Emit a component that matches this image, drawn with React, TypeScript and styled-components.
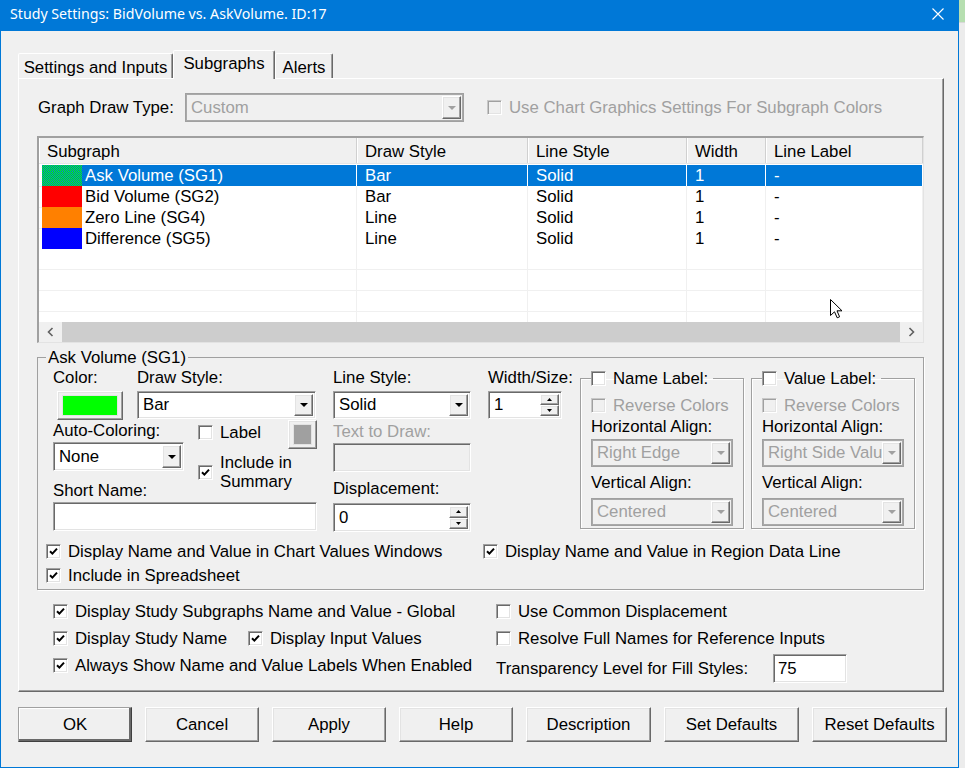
import React from 'react'
import styled, { createGlobalStyle, css } from 'styled-components'

const GlobalStyle = createGlobalStyle`
  * { box-sizing: border-box; }
  html, body { margin: 0; padding: 0; }
  body {
    background: #e8e8e8;
    font-family: "Liberation Sans", Arial, sans-serif;
    font-size: 16.8px;
    color: #000;
  }
`

const raised = css`
  border: 1px solid;
  border-color: #ffffff #696969 #696969 #ffffff;
  box-shadow: inset -1px -1px 0 #a0a0a0, inset 1px 1px 0 #e3e3e3;
`

const sunken = css`
  border: 1px solid;
  border-color: #a0a0a0 #ffffff #ffffff #a0a0a0;
  box-shadow: inset 1px 1px 0 #696969, inset -1px -1px 0 #e3e3e3;
`

const subgraphs = [
  { id: 1, name: 'Ask Volume (SG1)', color: '#00ff00', style: 'Bar', line: 'Solid', width: '1', label: '-' },
  { id: 2, name: 'Bid Volume (SG2)', color: '#ff0000', style: 'Bar', line: 'Solid', width: '1', label: '-' },
  { id: 3, name: 'Zero Line (SG4)', color: '#ff8000', style: 'Line', line: 'Solid', width: '1', label: '-' },
  { id: 4, name: 'Difference (SG5)', color: '#0000ff', style: 'Line', line: 'Solid', width: '1', label: '-' },
]

const columns = ['Subgraph', 'Draw Style', 'Line Style', 'Width', 'Line Label']
const buttons = [
  { text: 'OK', w: 114, main: true },
  { text: 'Cancel', w: 114 },
  { text: 'Apply', w: 114 },
  { text: 'Help', w: 114 },
  { text: 'Description', w: 125 },
  { text: 'Set Defaults', w: 135 },
  { text: 'Reset Defaults', w: 135 },
]

const DownTri = ({ disabled }: { disabled?: boolean }) => (
  <svg width="8" height="4" viewBox="0 0 8 4">
    <polygon points="0,0 8,0 4,4" fill={disabled ? '#a0a0a0' : '#000'} />
  </svg>
)

const SmallTri = ({ up }: { up?: boolean }) => (
  <svg width="5" height="3" viewBox="0 0 5 3">
    <polygon points={up ? '0,3 5,3 2.5,0' : '0,0 5,0 2.5,3'} fill="#000" />
  </svg>
)

const Tick = () => (
  <svg width="9" height="9" viewBox="0 0 9 9">
    <path d="M1 4.2 L3.4 6.6 L8 1.6" stroke="#000" strokeWidth="2" fill="none" />
  </svg>
)

const Check = ({ checked, disabled }: { checked?: boolean; disabled?: boolean }) => (
  <CheckBox $disabled={disabled}>{checked && <Tick />}</CheckBox>
)

const Combo = ({ value, w, h, disabled, mt }: { value: string; w: number; h?: number; disabled?: boolean; mt?: number }) => (
  <FieldShell $w={w} $h={h} $disabled={disabled} $mt={mt}>
    <FieldValue>{value}</FieldValue>
    <DropButton>
      <DownTri disabled={disabled} />
    </DropButton>
  </FieldShell>
)

const Spin = ({ value, w, h, mt }: { value: string; w: number; h?: number; mt?: number }) => (
  <FieldShell $w={w} $h={h} $mt={mt}>
    <FieldValue>{value}</FieldValue>
    <SpinButtons>
      <SpinButton><SmallTri up /></SpinButton>
      <SpinButton><SmallTri /></SpinButton>
    </SpinButtons>
  </FieldShell>
)

const LabelGroup = ({ title, h, v }: { title: string; h: string; v: string }) => (
  <SubGroup>
    <SubLegend>
      <Check />
      {title}
    </SubLegend>
    <CheckRow $disabled $mt={8}>
      <Check disabled />
      Reverse Colors
    </CheckRow>
    <FieldLabel $mt={3}>Horizontal Align:</FieldLabel>
    <Combo value={h} w={142} disabled mt={3} />
    <FieldLabel $mt={7}>Vertical Align:</FieldLabel>
    <Combo value={v} w={142} disabled mt={6} />
  </SubGroup>
)

export default function App() {
  return (
    <Page>
      <GlobalStyle />
      <Window>
        <TitleBar>
          <span>Study Settings: BidVolume vs. AskVolume. ID:17</span>
          <svg width="12" height="12" viewBox="0 0 12 12">
            <path d="M0.5 0.5 L11.5 11.5 M11.5 0.5 L0.5 11.5" stroke="#fff" strokeWidth="1.1" />
          </svg>
        </TitleBar>
        <Body>
          <TabStrip>
            <Tab $w={155}>Settings and Inputs</Tab>
            <Tab $w={102} $active>Subgraphs</Tab>
            <Tab $w={58}>Alerts</Tab>
          </TabStrip>
          <TabPanel>
            <DrawTypeRow>
              <FieldLabel $w={147}>Graph Draw Type:</FieldLabel>
              <Combo value="Custom" w={279} h={29} disabled />
              <CheckRow $disabled $ml={23}>
                <Check disabled />
                Use Chart Graphics Settings For Subgraph Colors
              </CheckRow>
            </DrawTypeRow>

            <ListFrame>
              <ListHeader>
                {columns.map((c) => (
                  <HeaderCell key={c}>{c}</HeaderCell>
                ))}
              </ListHeader>
              <ListBody>
                {subgraphs.map((s, i) => (
                  <ListRow key={s.id} $selected={i === 0}>
                    <NameCell $selected={i === 0}>
                      <Swatch $color={s.color} $selected={i === 0} />
                      <NameText $selected={i === 0}>{s.name}</NameText>
                    </NameCell>
                    <Cell $selected={i === 0}>{s.style}</Cell>
                    <Cell $selected={i === 0}>{s.line}</Cell>
                    <Cell $selected={i === 0}>{s.width}</Cell>
                    <Cell $selected={i === 0}>{s.label}</Cell>
                  </ListRow>
                ))}
                {[0, 1, 2, 3].map((n) => (
                  <ListRow key={`empty-${n}`}>
                    <Cell />
                    <Cell />
                    <Cell />
                    <Cell />
                    <Cell />
                  </ListRow>
                ))}
              </ListBody>
              <ScrollBar>
                <ScrollArrow>
                  <svg width="7" height="10" viewBox="0 0 7 10">
                    <path d="M5.5 1 L1.5 5 L5.5 9" stroke="#606060" strokeWidth="1.6" fill="none" />
                  </svg>
                </ScrollArrow>
                <ScrollThumb />
                <ScrollArrow>
                  <svg width="7" height="10" viewBox="0 0 7 10">
                    <path d="M1.5 1 L5.5 5 L1.5 9" stroke="#606060" strokeWidth="1.6" fill="none" />
                  </svg>
                </ScrollArrow>
              </ScrollBar>
              <Cursor width="13" height="20" viewBox="0 0 13 20">
                <path d="M0.5 0.5 L0.5 16.5 L4.5 12.8 L7.2 18.8 L9.6 17.8 L7 11.8 L12 11.8 Z" fill="#fff" stroke="#000" strokeWidth="1" />
              </Cursor>
            </ListFrame>

            <GroupBox>
              <GroupTitle>Ask Volume (SG1)</GroupTitle>
              <TopRow>
                <MainGrid>
                  <WideRow>
                    <Stack $w={84}>
                      <FieldLabel>Color:</FieldLabel>
                      <SwatchButton $w={66} $h={29} $mt={4} $ml={4}>
                        <SwatchFill $color="#00ff00" />
                      </SwatchButton>
                    </Stack>
                    <Stack>
                      <FieldLabel>Draw Style:</FieldLabel>
                      <Combo value="Bar" w={179} mt={4} />
                    </Stack>
                  </WideRow>
                  <Stack $mt={2}>
                    <FieldLabel>Auto-Coloring:</FieldLabel>
                    <Combo value="None" w={131} h={29} mt={2} />
                    <FieldLabel $mt={11}>Short Name:</FieldLabel>
                  </Stack>
                  <CheckColumn>
                    <CheckLine>
                      <CheckRow $mt={3}>
                        <Check />
                        Label
                      </CheckRow>
                      <SwatchButton $w={29} $h={29}>
                        <SwatchFill $color="#a0a0a0" />
                      </SwatchButton>
                    </CheckLine>
                    <TwoLineCheck>
                      <Check checked />
                      <span>
                        Include in
                        <br />
                        Summary
                      </span>
                    </TwoLineCheck>
                  </CheckColumn>
                  <WideRow>
                    <TextBox $w={264} $h={29} $mt={2} />
                  </WideRow>
                </MainGrid>

                <Stack $w={138} $ml={16}>
                  <FieldLabel>Line Style:</FieldLabel>
                  <Combo value="Solid" w={138} mt={4} />
                  <FieldLabel $mt={4} $disabled>Text to Draw:</FieldLabel>
                  <TextBox $w={138} $h={29} $mt={2} $disabled />
                  <FieldLabel $mt={8}>Displacement:</FieldLabel>
                  <Spin value="0" w={138} h={29} mt={5} />
                </Stack>

                <Stack $w={74} $ml={17}>
                  <FieldLabel>Width/Size:</FieldLabel>
                  <Spin value="1" w={74} mt={4} />
                </Stack>

                <Stack $ml={18}>
                  <LabelGroup title="Name Label:" h="Right Edge" v="Centered" />
                </Stack>
                <Stack $ml={7}>
                  <LabelGroup title="Value Label:" h="Right Side Valu" v="Centered" />
                </Stack>
              </TopRow>

              <CheckRow $mt={10}>
                <CheckPair $w={430}>
                  <Check checked />
                  Display Name and Value in Chart Values Windows
                </CheckPair>
                <CheckPair>
                  <Check checked />
                  Display Name and Value in Region Data Line
                </CheckPair>
              </CheckRow>
              <CheckRow $mt={5}>
                <Check checked />
                Include in Spreadsheet
              </CheckRow>
            </GroupBox>

            <Options>
              <Stack>
                <OptionRow>
                  <Check checked />
                  Display Study Subgraphs Name and Value - Global
                </OptionRow>
                <OptionRow>
                  <CheckPair $w={188}>
                    <Check checked />
                    Display Study Name
                  </CheckPair>
                  <CheckPair>
                    <Check checked />
                    Display Input Values
                  </CheckPair>
                </OptionRow>
                <OptionRow>
                  <Check checked />
                  Always Show Name and Value Labels When Enabled
                </OptionRow>
              </Stack>
              <Stack>
                <OptionRow>
                  <Check />
                  Use Common Displacement
                </OptionRow>
                <OptionRow>
                  <Check />
                  Resolve Full Names for Reference Inputs
                </OptionRow>
                <OptionRow $h={33}>
                  <FieldLabel $w={270}>Transparency Level for Fill Styles:</FieldLabel>
                  <TextBox $w={74} $h={29}>75</TextBox>
                </OptionRow>
              </Stack>
            </Options>
          </TabPanel>

          <ButtonRow>
            {buttons.map((b) => (
              <PushButton key={b.text} $w={b.w} $main={b.main}>
                {b.text}
              </PushButton>
            ))}
          </ButtonRow>
        </Body>
      </Window>
      <OutsideStrip />
    </Page>
  )
}

const Page = styled.div`
  display: flex;
  width: 965px;
  height: 768px;
  overflow: hidden;
`

const Window = styled.div`
  width: 959px;
  height: 768px;
  flex: none;
  display: flex;
  flex-direction: column;
  background: #f0f0f0;
  border: 1px solid #0078d7;
  border-top: 0;
`

const OutsideStrip = styled.div`
  flex: 1;
  background: linear-gradient(#b6dfb0 0 22px, #d8d8d8 22px 23px, #ececec 23px);
`

const TitleBar = styled.div`
  height: 31px;
  flex: none;
  display: flex;
  align-items: center;
  justify-content: space-between;
  padding: 0 14px 4px 9px;
  background: #0078d7;
  color: #fff;
  font-family: "Noto Sans", "Liberation Sans", sans-serif;
  font-size: 14.2px;
`

const Body = styled.div`
  flex: 1;
  display: flex;
  flex-direction: column;
  padding: 19px 0 0 17px;
`

const TabStrip = styled.div`
  display: flex;
  align-items: flex-end;
  height: 28px;
`

const Tab = styled.div<{ $w: number; $active?: boolean }>`
  position: relative;
  z-index: ${(p) => (p.$active ? 2 : 1)};
  width: ${(p) => p.$w}px;
  height: ${(p) => (p.$active ? 29 : 25)}px;
  margin-bottom: ${(p) => (p.$active ? -1 : 0)}px;
  padding-top: ${(p) => (p.$active ? 3 : 4)}px;
  text-align: center;
  line-height: 19px;
  white-space: nowrap;
  background: #f0f0f0;
  border: 1px solid;
  border-bottom: 0;
  border-color: #fff #696969 transparent #fff;
  box-shadow: inset -1px 0 0 #a0a0a0;
  border-radius: 2px 2px 0 0;
`

const TabPanel = styled.div`
  width: 926px;
  height: 614px;
  display: flex;
  flex-direction: column;
  padding: 14px 0 0 19px;
  border: 1px solid;
  border-color: #fff #696969 #696969 #fff;
  box-shadow: inset -1px -1px 0 #a0a0a0;
`

const DrawTypeRow = styled.div`
  display: flex;
  align-items: center;
  height: 29px;
`

const FieldLabel = styled.span<{ $w?: number; $mt?: number; $disabled?: boolean }>`
  display: block;
  flex: none;
  width: ${(p) => (p.$w ? `${p.$w}px` : 'auto')};
  margin-top: ${(p) => p.$mt ?? 0}px;
  line-height: 18px;
  white-space: nowrap;
  color: ${(p) => (p.$disabled ? '#a0a0a0' : '#000')};
`

const FieldShell = styled.div<{ $w: number; $h?: number; $mt?: number; $disabled?: boolean }>`
  flex: none;
  width: ${(p) => p.$w}px;
  height: ${(p) => p.$h ?? 28}px;
  margin-top: ${(p) => p.$mt ?? 0}px;
  display: flex;
  padding: 2px;
  ${sunken}
  ${(p) =>
    p.$disabled &&
    css`
      border-color: #a0a0a0;
      box-shadow: inset 0 0 0 1px #a9a9a9;
    `}
  background: ${(p) => (p.$disabled ? '#f0f0f0' : '#fff')};
  color: ${(p) => (p.$disabled ? '#a0a0a0' : '#000')};
`

const FieldValue = styled.div`
  flex: 1;
  min-width: 0;
  display: flex;
  align-items: center;
  padding-left: 3px;
  white-space: nowrap;
`

const DropButton = styled.div`
  width: 19px;
  flex: none;
  display: flex;
  align-items: center;
  justify-content: center;
  background: #f0f0f0;
  ${raised}
`

const SpinButtons = styled.div`
  width: 19px;
  flex: none;
  display: flex;
  flex-direction: column;
`

const SpinButton = styled.div`
  flex: 1;
  display: flex;
  align-items: center;
  justify-content: center;
  background: #f0f0f0;
  ${raised}
`

const TextBox = styled.div<{ $w: number; $h: number; $mt?: number; $disabled?: boolean }>`
  flex: none;
  width: ${(p) => p.$w}px;
  height: ${(p) => p.$h}px;
  margin-top: ${(p) => p.$mt ?? 0}px;
  display: flex;
  align-items: center;
  padding-left: 4px;
  ${sunken}
  background: ${(p) => (p.$disabled ? '#f0f0f0' : '#fff')};
`

const CheckBox = styled.span<{ $disabled?: boolean }>`
  width: 15px;
  height: 15px;
  flex: none;
  display: flex;
  align-items: center;
  justify-content: center;
  border: 1px solid;
  border-color: ${(p) => (p.$disabled ? '#c8c8c8 #fff #fff #c8c8c8' : '#a0a0a0 #fff #fff #a0a0a0')};
  box-shadow: inset 1px 1px 0 ${(p) => (p.$disabled ? '#a0a0a0' : '#696969')}, inset -1px -1px 0 #e3e3e3;
  background: ${(p) => (p.$disabled ? '#f0f0f0' : '#fff')};
`

const CheckRow = styled.div<{ $mt?: number; $ml?: number; $disabled?: boolean }>`
  display: flex;
  align-items: center;
  gap: 7px;
  height: 19px;
  margin-top: ${(p) => p.$mt ?? 0}px;
  margin-left: ${(p) => p.$ml ?? 0}px;
  white-space: nowrap;
  color: ${(p) => (p.$disabled ? '#a0a0a0' : '#000')};
`

const CheckPair = styled.div<{ $w?: number }>`
  display: flex;
  align-items: center;
  gap: 7px;
  width: ${(p) => (p.$w ? `${p.$w}px` : 'auto')};
  flex: none;
  white-space: nowrap;
`

const ListFrame = styled.div`
  position: relative;
  width: 887px;
  height: 207px;
  margin: 14px 0 0 -1px;
  display: flex;
  flex-direction: column;
  background: #fff;
  border-style: solid;
  border-width: 2px 1px 1px 2px;
  border-color: #a0a0a0 #e3e3e3 #e3e3e3 #a0a0a0;
`

const gridCols = '318px 171px 159px 79px 1fr'

const ListHeader = styled.div`
  display: grid;
  grid-template-columns: ${gridCols};
  height: 26px;
  flex: none;
  background: #f0f0f0;
  border-bottom: 1px solid #e5e5e5;
`

const HeaderCell = styled.div`
  padding: 4px 0 0 8px;
  line-height: 20px;
  border-right: 1px solid #d0d0d0;
  box-shadow: inset 1px 0 0 #fff;
  white-space: nowrap;
`

const ListBody = styled.div`
  flex: 1;
  overflow: hidden;
  padding-top: 1px;
`

const ListRow = styled.div<{ $selected?: boolean }>`
  display: grid;
  grid-template-columns: ${gridCols};
  height: 21px;
  color: ${(p) => (p.$selected ? '#fff' : '#000')};
`

const Cell = styled.div<{ $selected?: boolean }>`
  padding-left: 8px;
  line-height: 21px;
  white-space: nowrap;
  overflow: hidden;
  background: ${(p) => (p.$selected ? '#0078d7' : '#fff')};
  border-right: 1px solid ${(p) => (p.$selected ? '#fff' : '#f0f0f0')};
  border-bottom: 1px solid #f0f0f0;
`

const NameCell = styled.div<{ $selected?: boolean }>`
  display: flex;
  padding-left: 3px;
  border-right: 1px solid ${(p) => (p.$selected ? '#fff' : '#f0f0f0')};
  border-bottom: 1px solid #f0f0f0;
`

const Swatch = styled.span<{ $color: string; $selected?: boolean }>`
  width: 40px;
  flex: none;
  background: ${(p) =>
    p.$selected ? `repeating-conic-gradient(${p.$color} 0 25%, #0078d7 0 50%) 0 0 / 2px 2px` : p.$color};
`

const NameText = styled.span<{ $selected?: boolean }>`
  flex: 1;
  padding-left: 3px;
  line-height: 21px;
  white-space: nowrap;
  background: ${(p) => (p.$selected ? '#0078d7' : '#fff')};
`

const ScrollBar = styled.div`
  height: 20px;
  flex: none;
  display: flex;
  background: #f0f0f0;
`

const ScrollArrow = styled.div`
  width: 23px;
  display: flex;
  align-items: center;
  justify-content: center;
`

const ScrollThumb = styled.div`
  flex: 1;
  background: #cdcdcd;
`

const Cursor = styled.svg`
  position: absolute;
  left: 791px;
  top: 161px;
`

const GroupBox = styled.fieldset`
  width: 887px;
  margin: 5px 0 0 -1px;
  padding: 2px 0 4px 8px;
  min-width: 0;
  border: 1px solid #a0a0a0;
  box-shadow: 1px 1px 0 #fff;
`

const GroupTitle = styled.legend`
  padding: 0 2px;
  line-height: 19px;
`

const TopRow = styled.div`
  display: flex;
  align-items: flex-start;
  padding-left: 7px;
`

const MainGrid = styled.div`
  width: 264px;
  flex: none;
  display: grid;
  grid-template-columns: 131px 14px 119px;
  align-items: start;
`

const WideRow = styled.div`
  grid-column: 1 / -1;
  display: flex;
`

const Stack = styled.div<{ $w?: number; $ml?: number; $mt?: number }>`
  display: flex;
  flex-direction: column;
  align-items: flex-start;
  flex: none;
  width: ${(p) => (p.$w ? `${p.$w}px` : 'auto')};
  margin-left: ${(p) => p.$ml ?? 0}px;
  margin-top: ${(p) => p.$mt ?? 0}px;
`

const CheckColumn = styled.div`
  grid-column: 3;
  display: flex;
  flex-direction: column;
`

const CheckLine = styled.div`
  display: flex;
  justify-content: space-between;
  align-items: flex-start;
`

const TwoLineCheck = styled.div`
  display: flex;
  align-items: center;
  gap: 7px;
  margin-top: 4px;
  line-height: 19px;
  white-space: nowrap;
`

const SwatchButton = styled.div<{ $w: number; $h: number; $mt?: number; $ml?: number }>`
  width: ${(p) => p.$w}px;
  height: ${(p) => p.$h}px;
  margin-top: ${(p) => p.$mt ?? 0}px;
  margin-left: ${(p) => p.$ml ?? 0}px;
  padding: 3px 4px;
  background: #f0f0f0;
  ${raised}
`

const SwatchFill = styled.div<{ $color: string }>`
  width: 100%;
  height: 100%;
  background: ${(p) => p.$color};
  border: 1px solid #e3e3e3;
`

const SubGroup = styled.fieldset`
  width: 164px;
  height: 160px;
  margin: 0;
  padding: 0 0 0 10px;
  min-width: 0;
  border: 1px solid #a0a0a0;
  box-shadow: 1px 1px 0 #fff, inset 1px 1px 0 #fff;
`

const SubLegend = styled.legend`
  display: flex;
  align-items: center;
  gap: 7px;
  padding: 0 5px 0 0;
  line-height: 19px;
  white-space: nowrap;
`

const Options = styled.div`
  display: grid;
  grid-template-columns: 443px 1fr;
  margin-top: 8px;
  padding-left: 15px;
`

const OptionRow = styled.div<{ $h?: number }>`
  display: flex;
  align-items: center;
  gap: 7px;
  height: ${(p) => p.$h ?? 27}px;
  white-space: nowrap;
`

const ButtonRow = styled.div`
  display: flex;
  gap: 13px;
  margin-top: 15px;
`

const PushButton = styled.div<{ $w: number; $main?: boolean }>`
  width: ${(p) => p.$w}px;
  height: 35px;
  display: flex;
  align-items: center;
  justify-content: center;
  background: #f0f0f0;
  white-space: nowrap;
  ${raised}
  ${(p) =>
    p.$main &&
    css`
      border-color: #a0a0a0 #404040 #404040 #a0a0a0;
      box-shadow: inset -2px -2px 0 #696969, inset 1px 1px 0 #fff;
    `}
`
